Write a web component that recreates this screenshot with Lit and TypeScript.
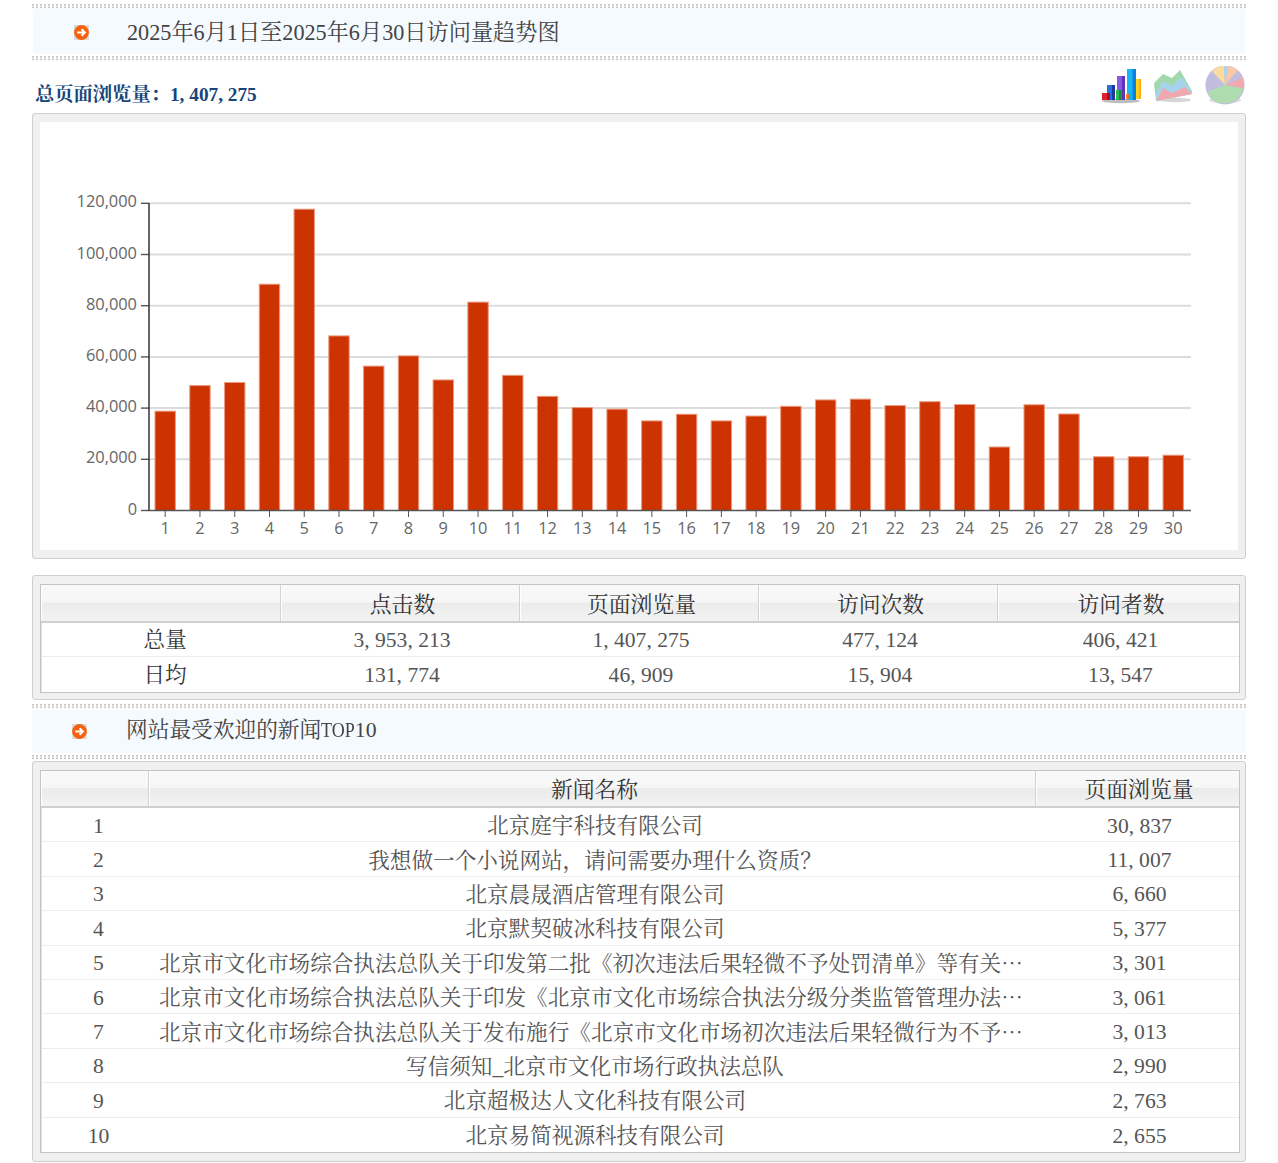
import { LitElement, html, css, svg } from "lit";
import { customElement } from "lit/decorators.js";

const values = [38800,48800,50000,88400,117700,68200,56400,60400,51000,81400,52800,44600,40200,39600,35000,37600,35000,36900,40700,43200,43500,41000,42500,41400,24800,41300,37700,21000,21000,21600];
const top10: [string, string][] = [
  ["北京庭宇科技有限公司", "30,837"],
  ["我想做一个小说网站，请问需要办理什么资质？", "11,007"],
  ["北京晨晟酒店管理有限公司", "6,660"],
  ["北京默契破冰科技有限公司", "5,377"],
  ["北京市文化市场综合执法总队关于印发第二批《初次违法后果轻微不予处罚清单》等有关⋯", "3,301"],
  ["北京市文化市场综合执法总队关于印发《北京市文化市场综合执法分级分类监管管理办法⋯", "3,061"],
  ["北京市文化市场综合执法总队关于发布施行《北京市文化市场初次违法后果轻微行为不予⋯", "3,013"],
  ["写信须知_北京市文化市场行政执法总队", "2,990"],
  ["北京超极达人文化科技有限公司", "2,763"],
  ["北京易简视源科技有限公司", "2,655"],
];

const num = (s: string) => {
  const parts = s.split(",");
  return parts.map((p, i) => (i < parts.length - 1 ? html`${p}<span class="c">,</span>` : p));
};

const arrow = html`<svg class="arrow" viewBox="0 0 15 15" width="15" height="15">
  <rect width="15" height="15" fill="#d5dde0"/>
  <circle cx="7.5" cy="7.5" r="7.4" fill="#f8620f"/>
  <path d="M3.2 7.5h7.4M7.6 4.2l3.3 3.3-3.3 3.3" fill="none" stroke="#fff" stroke-width="2"/>
</svg>`;

const chart = () => {
  const y0 = 510.5, k = 51.2 / 20000;
  const ticks = [0, 20000, 40000, 60000, 80000, 100000, 120000];
  return html`<svg class="chart" width="1198" height="428" viewBox="40 122 1198 428">
    ${ticks.slice(1).map((t) => svg`<line x1="149" x2="1191" y1=${y0 - t * k} y2=${y0 - t * k} stroke="#dcdcdc" stroke-width="2"/>`)}
    ${values.map((v, i) => svg`<rect x=${155 + 34.76 * i} y=${y0 - v * k} width="20.4" height=${v * k} fill="#cc3300" stroke="#ea9a80" stroke-width="1"/>`)}
    ${ticks.map((t) => svg`<line x1="141" x2="149" y1=${y0 - t * k} y2=${y0 - t * k} stroke="#555" stroke-width="1.4"/>
      <text x="137" y=${y0 - t * k + 4} text-anchor="end" class="lbl">${t.toLocaleString("en-US")}</text>`)}
    <line x1="149" x2="149" y1="203" y2="511" stroke="#333" stroke-width="1.5"/>
    <line x1="149" x2="1191" y1="510.6" y2="510.6" stroke="#555" stroke-width="1.5"/>
    ${values.map((_, i) => svg`<line x1=${165.2 + 34.76 * i} x2=${165.2 + 34.76 * i} y1="511" y2="517" stroke="#555" stroke-width="1"/>
      <text x=${165.2 + 34.76 * i} y="534" text-anchor="middle" class="lbl">${i + 1}</text>`)}
  </svg>`;
};

const bar = (x: number, y: number, w: number, h: number, a: string, b: string) =>
  svg`<rect x=${x} y=${y} width=${w} height=${h} fill=${a}/><rect x=${x + w * 0.62} y=${y} width=${w * 0.38} height=${h} fill=${b}/>`;

const icons = html`<div class="icons">
  <svg width="42" height="38" viewBox="1101 66 42 38">
    <ellipse cx="1121" cy="100" rx="19" ry="2.2" fill="#888" opacity=".55"/>
    ${bar(1136, 78, 5, 20, "#ffd21c", "#ffab12")}
    ${bar(1127, 68, 9, 31, "#19b4f4", "#0d7fe0")}
    ${bar(1117, 75, 8, 24, "#8a58e2", "#5d34b8")}
    ${bar(1107, 84, 8, 15, "#2c6fdc", "#1f3a9c")}
    ${bar(1116, 89, 5, 10, "#2fbb54", "#168a3a")}
    ${bar(1126, 93, 4, 5, "#f88a22", "#e0601a")}
    ${bar(1102, 92, 8, 7, "#e0202a", "#a80f1a")}
  </svg>
  <svg width="42" height="36" viewBox="1153 68 42 36">
    <ellipse cx="1175" cy="99" rx="16" ry="2.2" fill="#bbb" opacity=".6"/>
    <path d="M1154 82 1163 73l9 4 8-8 12 21v3l-36 7Z" fill="#a2d9ac"/>
    <path d="M1156 92 1163 80l9 5 9-9 11 14v3l-36 7Z" fill="#a6d4ec"/>
    <path d="M1156 100 1163 87l9 5 13-6 7 7Z" fill="#f0a8ae"/>
  </svg>
  <svg width="41" height="39" viewBox="1205 66 41 39">
    <ellipse cx="1225" cy="100" rx="16" ry="3.4" fill="#dedede"/>
    <circle cx="1225" cy="85" r="19.6" fill="#c1bddf"/>
    <path d="M1225 85 1212 71A19.6 19.6 0 0 1 1224 65.5Z" fill="#fbdc9c"/>
    <path d="M1225 85 1224 65.5h4.4Z" fill="#a8d8f0"/>
    <path d="M1225 85 1228.4 65.5A19.6 19.6 0 0 1 1238 70.5Z" fill="#f8c8a8"/>
    <path d="M1225 85 1238 70.5a19.6 19.6 0 0 1 5 7Z" fill="#c1bddf"/>
    <path d="M1225 85 1243 77.5a19.6 19.6 0 0 1 .5 11Z" fill="#f0aab0"/>
    <path d="M1225 85 1243.5 88.5C1241 98 1233 103.5 1225 103.5S1210 100 1207.5 92Z" fill="#aedcb0"/>
  </svg>
</div>`;

@customElement("app-root")
export class AppRoot extends LitElement {
  static styles = css`
    :host {
      display: block;
      box-sizing: border-box;
      height: 1163px;
      padding: 4px 32px 0;
      background: #fff;
      font-family: "Liberation Serif", "SimSun", "Noto Serif CJK SC", "Noto Sans CJK SC", serif;
      color: #555;
      overflow: hidden;
    }
    .c { padding-right: 0.25em; }
    .dots {
      height: 5px;
      background-image: radial-gradient(circle at 1px 1px, #c6c6c6 0.8px, transparent 1px);
      background-size: 4px 2.5px;
    }
    .dots.mid { margin: 4px 0 1px; }
    .dots.gap { margin: 2px 0 1px; }
    .title {
      display: flex;
      align-items: center;
      height: 45px;
      margin: 0 1px;
      background: #f5faff;
      font-size: 22.2px;
      color: #444;
    }
    .title span { padding-bottom: 3px; }
    .title .arrow { margin: 2px 38px 0 41px; flex: none; }
    .title.t2 { margin: 0; height: 43px; font-size: 21.7px; }
    .title.t2 .arrow { margin: 0 39px 0 40px; }
    .title.t2 span { padding-bottom: 4px; }
    .title .lat {
      display: inline-block;
      padding: 0;
      transform: scaleX(0.83);
      transform-origin: left;
      margin-right: -7px;
    }
    .head { margin-top: 2px; }
    .summary {
      display: flex;
      justify-content: space-between;
      align-items: flex-end;
      height: 49px;
      padding: 0 0 0 3px;
      margin-top: 3px;
    }
    .total { font-size: 19.3px; font-weight: bold; color: #17477a; line-height: 24px; padding-bottom: 6px; }
    .icons { display: flex; gap: 10px; align-items: flex-end; padding-bottom: 8px; }
    .icons svg { filter: blur(0.5px); display: block; }
    .panel {
      box-sizing: border-box;
      border: 1px solid #cfcfcf;
      border-radius: 3px;
      background: #f0f0f0;
      padding: 8px 7px;
    }
    .chartbox { background: #fff; height: 428px; overflow: hidden; }
    .chart { display: block; }
    .lbl { font: 16.4px "Open Sans", sans-serif; fill: #666; }
    .p2 { margin-top: 16px; height: 125px; }
    .p3 { height: 401px; }
    table {
      width: 1200px;
      border-collapse: separate;
      border-spacing: 0;
      table-layout: fixed;
      background: #fff;
      border: 1px solid #c4c4c4;
      font-size: 21.6px;
      line-height: 26px;
      text-align: center;
    }
    col.c239 { width: 239px; }
    col.c107 { width: 107px; }
    col.c887 { width: 887px; }
    th {
      box-sizing: border-box;
      height: 38px;
      padding: 3px 0 0 5px;
      font-weight: normal;
      font-size: 21.8px;
      color: #333;
      background: linear-gradient(#f9f9f9, #f6f6f6 48%, #ebebec 50%, #f2f3f3);
      border-left: 1px solid #d2d2d2;
      border-bottom: 2px solid #cfcfcf;
      box-shadow: inset 1px 0 #fff;
    }
    th:first-child { border-left: none; }
    td {
      box-sizing: border-box;
      padding: 0 0 0 5px;
      height: 34.4px;
      border-bottom: 1px solid #ececec;
      white-space: nowrap;
      overflow: hidden;
    }
    tr:last-child td { border-bottom: none; }
    td:first-child { border-left: 1px solid #e0e0e0; }
    td.hd { color: #333; padding: 0 0 0 8px; }
    .t-news th { height: 37px; }
    .t-news th:last-child { padding-left: 3px; }
    .t-news td.n { padding: 2px 0 0 5px; }
    .t-news td.i { padding: 2px 0 0 7px; }
    .t-news td.s { padding: 3px 0 0 7px; }
    .t-news td.long { text-align: left; padding: 3px 0 0 11px; }
  `;

  render() {
    return html`
      <div class="dots"></div>
      <div class="title">${arrow}<span>2025年6月1日至2025年6月30日访问量趋势图</span></div>
      <div class="dots head"></div>
      <div class="summary">
        <div class="total">总页面浏览量：${num("1,407,275")}</div>
        ${icons}
      </div>
      <div class="panel"><div class="chartbox">${chart()}</div></div>
      <div class="panel p2">
        <table>
          <colgroup><col class="c239"/><col class="c239"/><col class="c239"/><col class="c239"/><col/></colgroup>
          <tr><th></th><th>点击数</th><th>页面浏览量</th><th>访问次数</th><th>访问者数</th></tr>
          <tr><td class="hd">总量</td><td>${num("3,953,213")}</td><td>${num("1,407,275")}</td><td>${num("477,124")}</td><td>${num("406,421")}</td></tr>
          <tr><td class="hd">日均</td><td>${num("131,774")}</td><td>${num("46,909")}</td><td>${num("15,904")}</td><td>${num("13,547")}</td></tr>
        </table>
      </div>
      <div class="dots mid"></div>
      <div class="title t2">${arrow}<span>网站最受欢迎的新闻<span class="lat">TOP</span>10</span></div>
      <div class="dots gap"></div>
      <div class="panel p3">
        <table class="t-news">
          <colgroup><col class="c107"/><col class="c887"/><col/></colgroup>
          <tr><th></th><th>新闻名称</th><th>页面浏览量</th></tr>
          ${top10.map(([n, v], i) => html`<tr><td class="i">${i + 1}</td><td class=${n.endsWith("⋯") ? "long" : "s"}>${n}</td><td class="n">${num(v)}</td></tr>`)}
        </table>
      </div>
    `;
  }
}
